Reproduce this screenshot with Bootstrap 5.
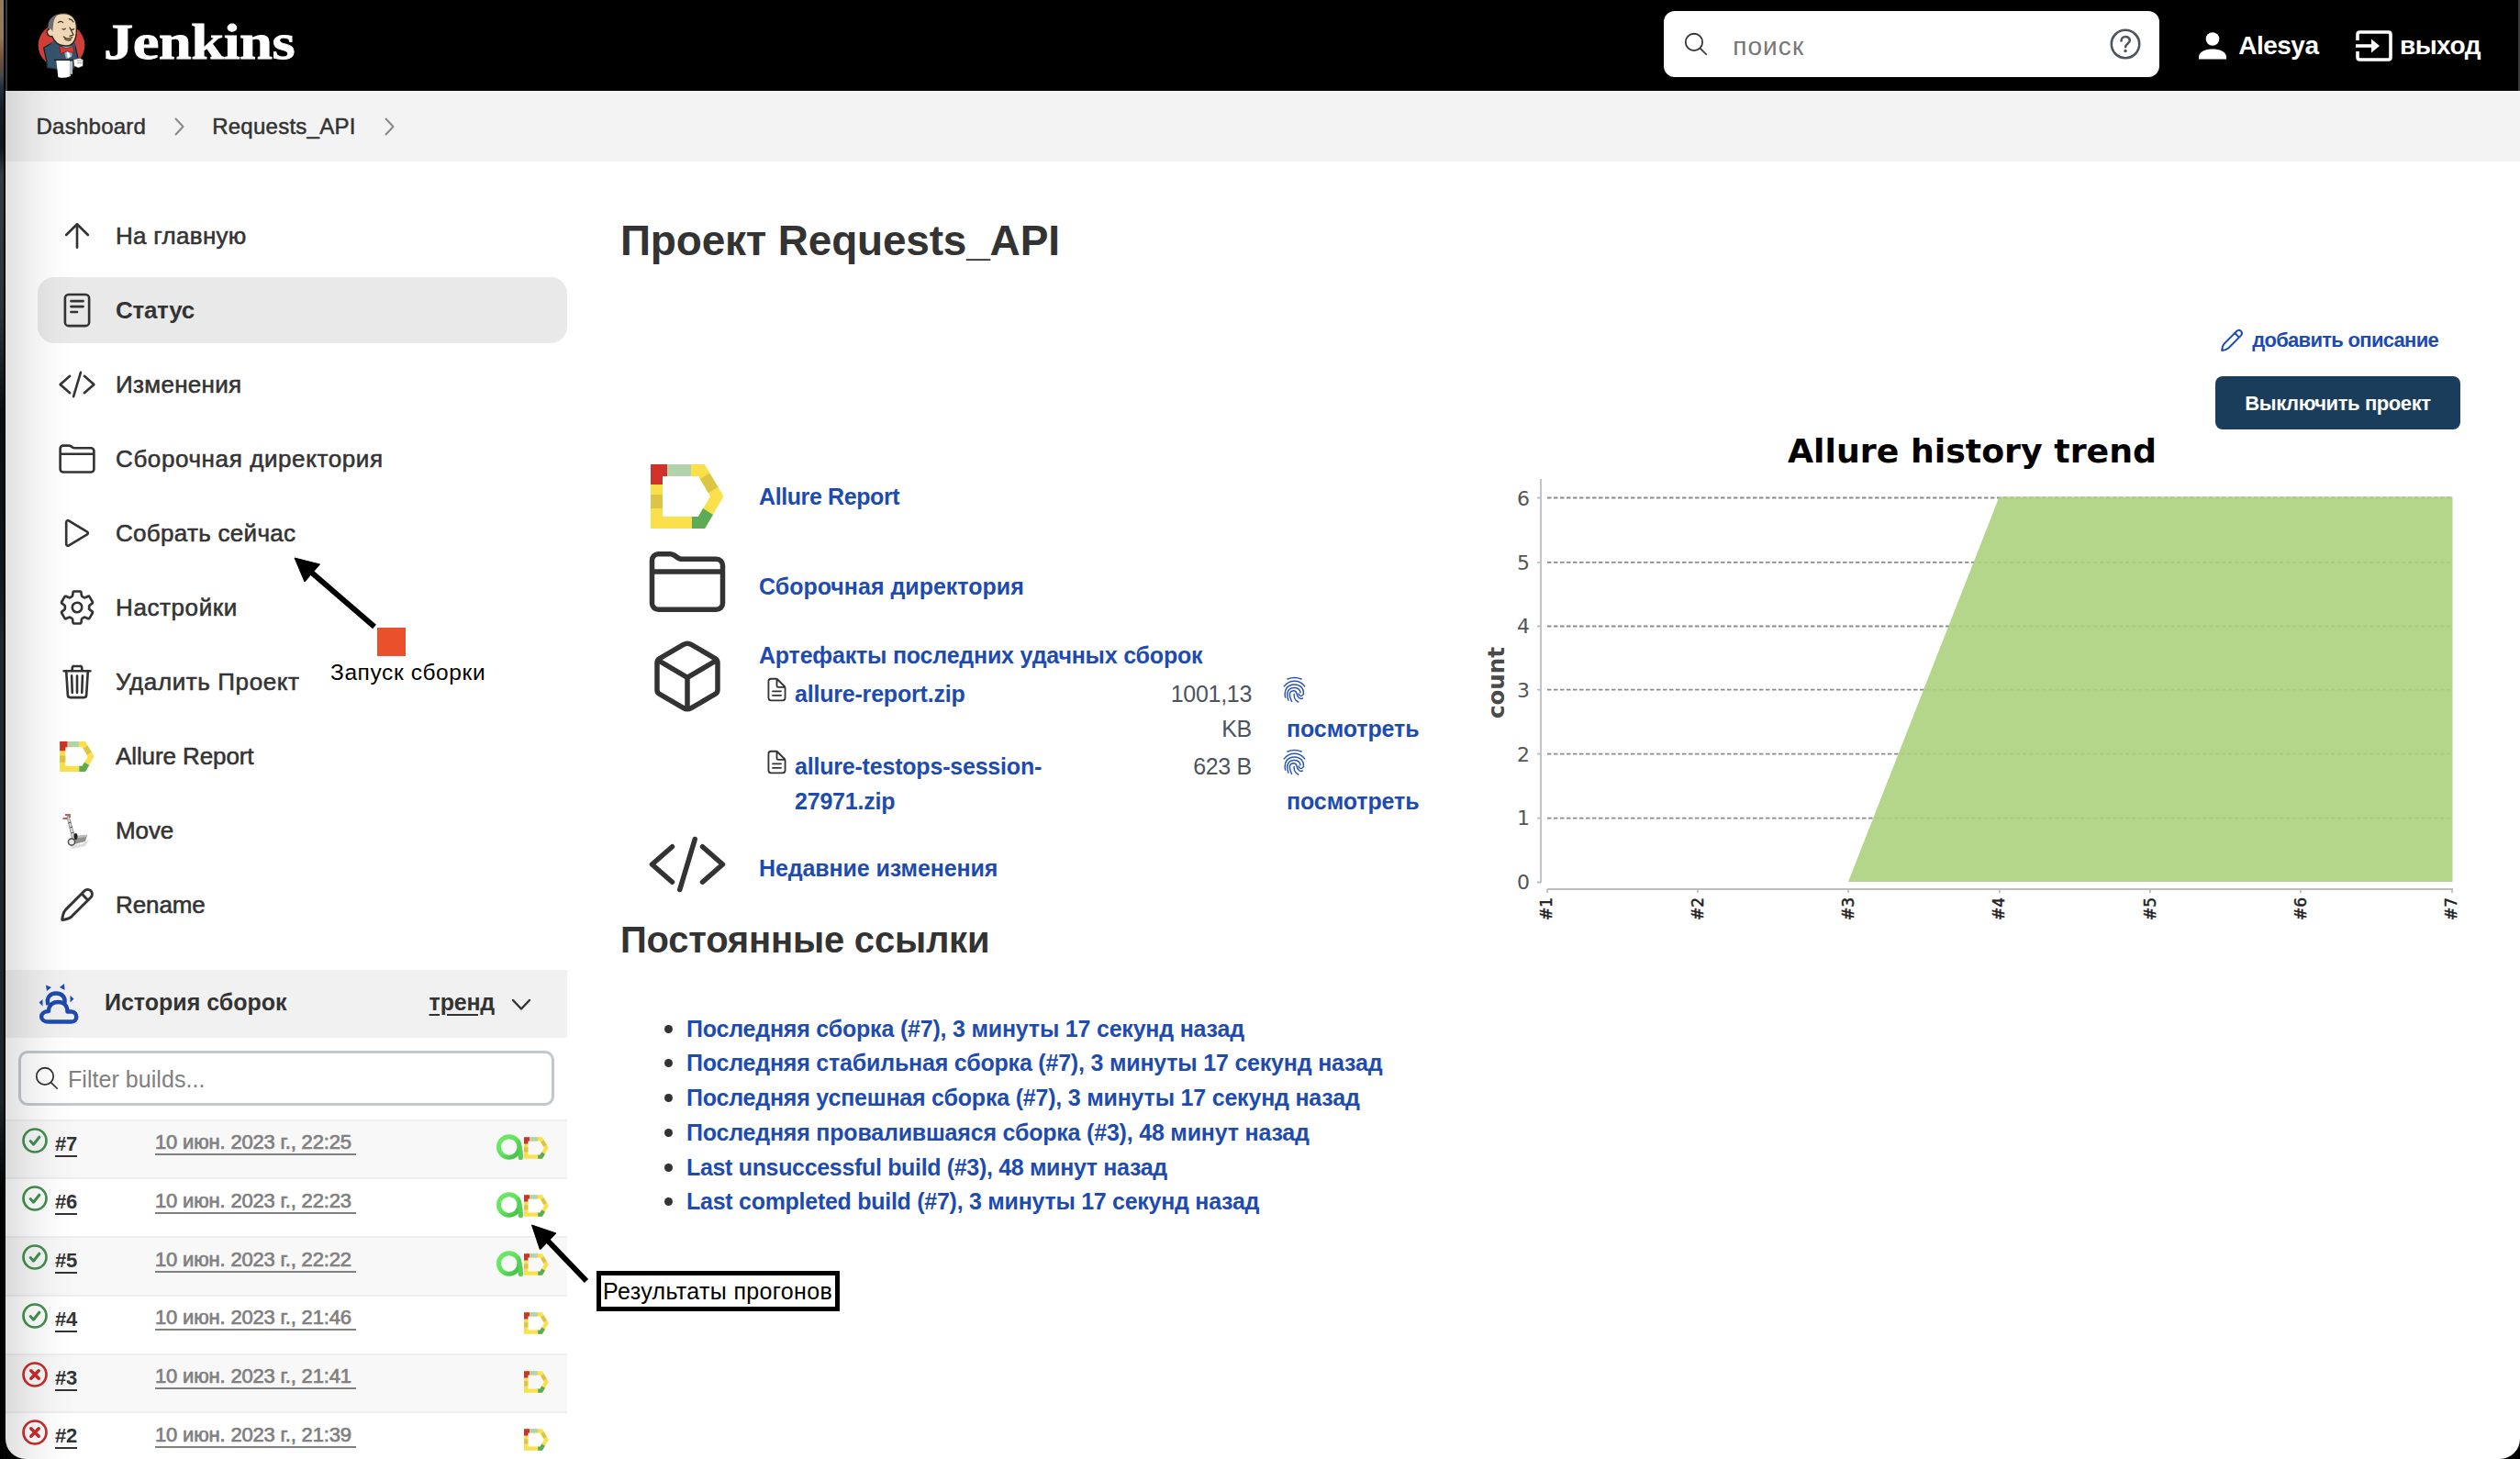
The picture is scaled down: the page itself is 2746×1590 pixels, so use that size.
<!DOCTYPE html>
<html lang="ru">
<head>
<meta charset="utf-8">
<title>Requests_API [Jenkins]</title>
<link rel="stylesheet" href="https://cdn.jsdelivr.net/npm/bootstrap@5.3.0/dist/css/bootstrap.min.css">
<style>
html { background: #000; }
body { background: #000; font-family: "Liberation Sans", Arial, sans-serif; color: #333; width: 2746px; height: 1590px; overflow: hidden; font-size: 25px; }
a { text-decoration: none; color: #1d4bb0; }
svg { display: block; flex: none; }
.desk { width: 6px; flex: none; border-right: 2px solid #04070a;
  background: linear-gradient(#8f7c5c 0, #94795a 40px, #6f4f3c 65px, #4a4a4c 82px, #22303d 95px, #141d26 120px, #10161c 160px, #343b42 190px, #2d3439 340px, #0a0e11 450px, #11161a 620px, #22282c 700px, #1e2428 1200px, #000 1300px); }
.win { background: #fff; border-radius: 0 0 22px 22px; overflow: hidden; }
.edge-shade { position: absolute; left: 0; top: 99px; bottom: 0; width: 78px; pointer-events: none;
  background: linear-gradient(90deg, rgba(0,0,0,.12), rgba(0,0,0,.06) 35%, rgba(0,0,0,.02) 65%, transparent); }
.topbar { height: 99px; background: #000; border-left: 2px solid #3a3a3a; border-right: 2px solid #3a3a3a; padding: 0 41px 0 32px; color: #fff; font-weight: 700; font-size: 28px; letter-spacing: -.5px; }
.find-box { width: 540px; height: 72px; background: #fff; border-radius: 12px; padding: 0 20px 0 20px; margin: -3px 43px 0 0; }
.find-box .ph { color: #777; font-weight: 400; letter-spacing: 1.1px; margin: 5px 0 0 25px; }
.user-name { margin: 0 40.5px 0 13px; }
.crumbs { height: 77px; background: #f3f3f3; padding-left: 33.5px; font-size: 24px; letter-spacing: .25px; -webkit-text-stroke: .5px; }
.crumbs svg { margin: 0 30px 0 31px; stroke: #888; stroke-width: 2; }
.side { width: 612px; flex: none; }
.tasks { padding: 45px 0 0 35px; gap: 9px; }
.task-item { height: 72px; padding-left: 22px; gap: 21px; border-radius: 18px; font-size: 26px; letter-spacing: .3px; -webkit-text-stroke: .55px; color: #333; }
.task-item.on { background: #e9e9e9; font-weight: 700; letter-spacing: -.3px; -webkit-text-stroke: 0; }
.task-item.wide { letter-spacing: .6px; }
.task-item.tight { letter-spacing: -.1px; }
.ic { fill: none; stroke: currentColor; stroke-width: 32; stroke-linecap: round; stroke-linejoin: round; }
.ic-find { color: #333; stroke-width: 30; }
.pane-head { height: 74px; margin-top: 35px; background: #f1f1f1; padding: 0 35px 2px 36px; font-weight: 700; font-size: 25px; }
.pane-head .ttl { margin-left: 28px; }
.pane-head .trend { color: #333; text-decoration: underline; text-underline-offset: 4px; text-decoration-thickness: 2px; letter-spacing: -.2px; }
.filter { margin: 14px 14px 0; height: 60px; border: 3px solid #c2c9ce; border-radius: 10px; padding-left: 13px; color: #808080; letter-spacing: .05px; }
.builds { margin-top: 14.5px; }
.b-row { height: 63.8px; border-top: 2px solid #efefef; padding: 0 20px 0 18px; font-size: 22px; }
.b-row:nth-child(odd) { background: #f8f8f8; }
.b-row .st { margin-top: 7px; }
.b-row .num { width: 109px; margin: 8px 0 0 8px; font-weight: 700; }
.b-row .num a { color: #333; border-bottom: 2px solid #333; line-height: 24px; display: inline-block; letter-spacing: -.3px; }
.b-row .dt { margin-top: 11.5px; color: #808080; border-bottom: 2px solid #808080; line-height: 24px; height: 26px; padding-right: 5px; letter-spacing: -.17px; -webkit-text-stroke: .7px; }
.b-row .qa { margin-top: 14px; }
.b-row .al { margin-top: 17px; }
.main { padding: 58px 0 0 58px; }
h1.pt { font-size: 46px; line-height: 56px; margin: 0; font-weight: 700; letter-spacing: -.2px; }
.left-col { width: 934px; padding-top: 206px; flex: none; }
.lk { font-weight: 700; letter-spacing: -.2px; line-height: 38px; }
.r { padding-left: 29px; }
.r .big { margin-right: 34px; }
.file-line { margin: 0 0 3px 5px; }
.file-name { width: 370px; margin-left: 5px; }
.file-size { width: 128px; text-align: right; line-height: 38px; color: #4d545d; letter-spacing: -.3px; }
.fp { margin-left: 32px; width: 160px; line-height: 38px; }
.fp svg { margin: 0 0 9px 2px; }
.fp .lk { margin-left: 6px; letter-spacing: -.1px; }
h2.pl { font-size: 40px; line-height: 60px; margin: 0; font-weight: 700; letter-spacing: -.2px; }
.perma { margin: 47.500px 0 0 0; padding-left: 72px; list-style: none; }
.perma li { height: 37.8px; line-height: 38px; position: relative; white-space: nowrap; }
.perma li::before { content: ""; position: absolute; left: -24px; top: 15px; width: 9px; height: 9px; border-radius: 50%; background: #333; }
.right-col { width: 1080px; }
.desc { margin: 60px 33px 0 0; height: 41px; font-size: 22px; font-weight: 700; letter-spacing: -.7px; gap: 8px; }
.off-btn { width: 267px; height: 58px; margin: 19px 9px 0 0; background: #1b3d5c; border: 0; border-radius: 8px; color: #fff; font-size: 22px; font-weight: 700; letter-spacing: -.4px; padding: 0; }
.off-btn:hover { background: #1b3d5c; }
.chart text { font-family: "DejaVu Sans", sans-serif; }
.note { position: absolute; color: #000; white-space: nowrap; }
.note-run { left: 360px; top: 718px; font-size: 24.5px; line-height: 30px; letter-spacing: .6px; }
.note-res { left: 650px; top: 1384.5px; width: 265px; height: 44px; border: 5px solid #000; background: #fff; font-size: 25px; line-height: 34px; padding-left: 2px; letter-spacing: .35px; }
.marks { position: absolute; left: 0; top: 0; }
</style>
<script src="https://cdn.jsdelivr.net/npm/bootstrap@5.3.0/dist/js/bootstrap.bundle.min.js"></script>
</head>
<body class="d-flex position-relative m-0">
<svg width="0" height="0" class="position-absolute">
  <defs>
    <linearGradient id="gr" x1="0" x2="1" y1="0" y2="1"><stop offset="0" stop-color="#6fe86a"/><stop offset=".45" stop-color="#5fe65c"/><stop offset="1" stop-color="#44b848"/></linearGradient>
    <symbol id="allure" viewBox="0 0 80 70">
      <path fill="#fae04a" fill-rule="evenodd" d="M0 0H59L79.500 35 59 70H0zM13 13V57H52L65 35 52 13z"/>
      <path fill="#d0312a" d="M0 0H18V13H13V22H0z"/><path fill="#b2d3ab" d="M18 0H44V13H18z"/>
      <path fill="#dcc444" d="M0 33H13V48H0zM54 16 64 9.500 73.500 25 63 31z"/>
      <path fill="#5cab55" d="M45 57H52L57 48 68 55 59 70H45z"/>
    </symbol>
    <symbol id="qa" viewBox="0 0 30 29">
      <circle cx="13.700" cy="14" r="11.200" fill="none" stroke="url(#gr)" stroke-width="5"/>
      <path d="M24.500 5c2.800 5 4.500 12 4.500 20.500a2.600 2.600 0 0 1-5.200 0V12z" fill="#55cf55"/>
    </symbol>
    <symbol id="ok" viewBox="0 0 28 28"><circle cx="14" cy="14" r="12.500" fill="none" stroke="#3f9150" stroke-width="2.700"/><path d="M9.200 14.500l3.300 3.700 6.300-8" fill="none" stroke="#3f9150" stroke-width="3" stroke-linecap="round" stroke-linejoin="round"/></symbol>
    <symbol id="bad" viewBox="0 0 28 28"><circle cx="14" cy="14" r="12.500" fill="none" stroke="#cc2a2a" stroke-width="2.700"/><path d="M9.800 9.800l8.400 8.400M18.200 9.800l-8.400 8.400" fill="none" stroke="#cc2a2a" stroke-width="3.600" stroke-linecap="round"/></symbol>
    <symbol id="folder" viewBox="0 0 512 512"><path d="M440 432H72a40 40 0 01-40-40V120a40 40 0 0140-40h75.890a40 40 0 0122.190 6.720l27.840 18.560a40 40 0 0022.190 6.720H440a40 40 0 0140 40v240a40 40 0 01-40 40zM32 192h448"/></symbol>
    <symbol id="code" viewBox="0 0 512 512"><path d="M160 368L32 256l128-112M352 368l128-112-128-112M304 96l-96 320"/></symbol>
    <symbol id="search" viewBox="0 0 512 512"><path d="M221.090 64a157.090 157.090 0 10157.090 157.090A157.100 157.100 0 00221.090 64zM338.290 338.290L448 448"/></symbol>
    <symbol id="pen" viewBox="0 0 512 512"><path stroke-width="36" d="M58 456 C62 400 76 352 104 322 L352 74 C376 50 412 46 438 70 C464 98 460 134 438 158 L190 406 C158 436 112 452 58 456zM318 110 L400 194"/></symbol>
    <symbol id="doc" viewBox="0 0 512 512"><path d="M416 221.250V416a48 48 0 01-48 48H144a48 48 0 01-48-48V96a48 48 0 0148-48h98.750a32 32 0 0122.620 9.370l141.260 141.260a32 32 0 019.370 22.620zM256 56v120a32 32 0 0032 32h120M176 288h160M176 368h160"/></symbol>
    <symbol id="finger" viewBox="24 40 76 88"><path fill="none" stroke="#2a55b8" stroke-width="4.500" stroke-linecap="round" d="M39 49Q62 40 85 49M28 73Q42 56 62 56 83 56 96 73M32 110C26 84 40 67 62 67 84 67 94 84 92 98 89 109 77 106 76 98M42 119C33 92 43 78 61 78 76 78 81 88 82 94M53 123C39 94 50 88 60 88 72 88 68 100 74 108 78 114 84 115 89 113M75 125C64 120 60 112 61 99"/></symbol>
  </defs>
</svg>

<div class="desk"></div>
<div class="win flex-grow-1 position-relative d-flex flex-column">
  <header class="topbar d-flex align-items-center">
    <svg width="54" height="76" viewBox="120 30 162 228">
      <ellipse cx="201" cy="142" rx="76" ry="73" fill="#cd3f37"/>
      <path d="M143 150 L172 133 L244 138 L256 190 L240 222 L182 220 L154 216 L152 192z" fill="#33526b" stroke="#1b2026" stroke-width="4"/>
      <path d="M186 118 L166 136 L190 192 L246 190 L246 140 L238 118z" fill="#35536c"/>
      <path d="M204 144 L216 186 L234 180 L240 146z" fill="#8fb2cf"/><path d="M216 158l6-2 8 22-8 8z" fill="#fff"/>
      <path d="M160 92 C154 60 174 38 208 38 C240 38 252 62 250 92 C250 124 238 144 214 144 C190 144 176 128 170 112 C156 116 148 96 160 88z" fill="#efd7b5" stroke="#262220" stroke-width="4"/>
      <path d="M158 88 C154 62 170 46 190 41 C176 54 176 64 174 76 L172 98 C168 88 164 88 158 88z" fill="#6b6d70"/>
      <path d="M190 68q10-8 16 0M226 56q10 2 14 10M204 88q6 5 10-1M232 90q6 3 10-2M228 84l12 24-12 4M208 114q12 12 28 2M212 122q10 8 20 2" fill="none" stroke="#3a2c22" stroke-width="3.500" stroke-linecap="round"/>
      <path d="M194 144l22 8 24-6 2 22-22-6-22 8z" fill="#d63a34" stroke="#631a18" stroke-width="2"/>
      <path d="M176 190 L242 190" stroke="#1b2026" stroke-width="4"/>
      <path d="M184 192H228V244Q208 252 190 246z" fill="#fff"/><path d="M228 194h9v42h-6v8h-4z" fill="#b9bcc4"/>
      <path d="M240 188 L262 184 L272 190 L271 210 L256 216 L242 210z" fill="#fff" stroke="#333" stroke-width="2"/><path d="M252 192h16M252 200h16" stroke="#777" stroke-width="2"/>
    </svg>
    <svg width="230" height="96" class="ms-2" viewBox="0 0 230 96"><text x="11" y="62" font-family="Liberation Serif" font-weight="700" font-size="54" fill="#fff" stroke="#fff" stroke-width=".8" textLength="208" lengthAdjust="spacingAndGlyphs">Jenkins</text></svg>
    <div class="find-box d-flex align-items-center ms-auto">
      <svg class="ic ic-find" width="30" height="30"><use href="#search"/></svg>
      <span class="ph">поиск</span>
      <svg class="ms-auto" width="34" height="34" viewBox="0 0 34 34" fill="none" stroke="#4d545d" stroke-width="2.600"><circle cx="17" cy="17" r="15.200"/><path d="M12.500 13.500c0-6 9.300-6 9.300-.5 0 3.600-4.700 3.800-4.700 7.200" stroke-linecap="round"/><circle cx="17" cy="24.600" r="1" fill="#4d545d" stroke-width="1.500"/></svg>
    </div>
    <svg width="30" height="30" viewBox="0 0 30 30" fill="#fff"><circle cx="15" cy="7.500" r="7.300"/><path d="M0 29.500V27C0 21 8 18.500 15 18.500S30 21 30 27v2.500z"/></svg>
    <span class="user-name">Alesya</span>
    <svg width="40" height="34" viewBox="0 0 40 34" fill="none" stroke="#fff" stroke-width="3.600"><path d="M2 11V4.500Q2 2 4.500 2H35.500Q38 2 38 4.500V29.500Q38 32 35.500 32H4.500Q2 32 2 29.500V23"/><path d="M0 17H19"/><path d="M17 9.500L26 17l-9 7.500z" fill="#fff" stroke="none"/></svg>
    <span class="ps-2">выход</span>
  </header>
  <nav class="crumbs d-flex align-items-center">
    <span>Dashboard</span>
    <svg class="ic" width="11" height="20" viewBox="0 0 11 20"><path d="M1.500 1.500 9.500 10 1.500 18.500"/></svg>
    <span>Requests_API</span>
    <svg class="ic" width="11" height="20" viewBox="0 0 11 20"><path d="M1.500 1.500 9.500 10 1.500 18.500"/></svg>
  </nav>
  <div class="d-flex flex-grow-1">
    <aside class="side">
      <nav class="tasks d-flex flex-column">
        <a class="task-item d-flex align-items-center"><svg class="ic" width="42" height="42" viewBox="0 0 512 512"><path d="M112 244l144-144 144 144M256 120v292"/></svg>На главную</a>
        <a class="task-item on d-flex align-items-center"><svg class="ic" width="42" height="42" viewBox="0 0 512 512"><rect x="96" y="48" width="320" height="416" rx="48"/><path d="M176 136h160M176 208h160M176 280h80"/></svg>Статус</a>
        <a class="task-item d-flex align-items-center"><svg class="ic" width="42" height="42"><use href="#code"/></svg>Изменения</a>
        <a class="task-item wide d-flex align-items-center"><svg class="ic" width="42" height="42"><use href="#folder"/></svg>Сборочная директория</a>
        <a class="task-item d-flex align-items-center"><svg class="ic" width="42" height="42" viewBox="0 0 512 512"><path d="M112 111v290c0 17.440 17 28.520 31 20.160l247.900-148.370c12.120-7.250 12.120-26.330 0-33.580L143 90.840c-14-8.360-31 2.720-31 20.160z"/></svg>Собрать сейчас</a>
        <a class="task-item wide d-flex align-items-center"><svg class="ic" width="42" height="42" viewBox="0 0 512 512"><path d="M262.290 192.310a64 64 0 1057.400 57.400 64.130 64.130 0 00-57.400-57.400zM416.390 256a154.340 154.340 0 01-1.530 20.790l45.210 35.460a10.810 10.810 0 012.450 13.750l-42.770 74a10.810 10.810 0 01-13.140 4.590l-44.900-18.080a16.110 16.110 0 00-15.170 1.750A164.480 164.480 0 01325 400.800a15.940 15.940 0 00-8.820 12.140l-6.730 47.890a11.080 11.080 0 01-10.680 9.170h-85.540a11.110 11.110 0 01-10.690-8.870l-6.720-47.820a16.070 16.070 0 00-9-12.220 155.300 155.300 0 01-21.460-12.570 16 16 0 00-15.110-1.710l-44.890 18.070a10.810 10.810 0 01-13.140-4.580l-42.770-74a10.800 10.800 0 012.450-13.750l38.210-30a16.050 16.050 0 006-14.080c-.36-4.170-.58-8.330-.58-12.500s.21-8.270.58-12.350a16 16 0 00-6.070-13.940l-38.190-30A10.810 10.810 0 0149.480 186l42.770-74a10.810 10.810 0 0113.140-4.590l44.900 18.080a16.110 16.110 0 0015.170-1.750A164.480 164.480 0 01187 111.200a15.940 15.940 0 008.820-12.140l6.730-47.890A11.080 11.080 0 01213.230 42h85.540a11.110 11.110 0 0110.690 8.870l6.720 47.820a16.070 16.070 0 009 12.220 155.300 155.300 0 0121.460 12.570 16 16 0 0015.110 1.710l44.890-18.070a10.810 10.810 0 0113.140 4.580l42.770 74a10.800 10.800 0 01-2.450 13.750l-38.210 30a16.050 16.050 0 00-6.050 14.080c.33 4.140.55 8.300.55 12.470z"/></svg>Настройки</a>
        <a class="task-item wide d-flex align-items-center"><svg class="ic" width="42" height="42" viewBox="0 0 512 512"><path d="M112 112l20 320c.950 18.490 14.400 32 32 32h184c17.670 0 30.870-13.510 32-32l20-320M80 112h352M192 112V72a23.930 23.930 0 0124-24h80a23.930 23.930 0 0124 24v40M256 176v224M184 176l8 224M328 176l-8 224"/></svg>Удалить Проект</a>
        <a class="task-item tight d-flex align-items-center"><svg width="42" height="33"><use href="#allure"/></svg>Allure Report</a>
        <a class="task-item tight d-flex align-items-center"><svg width="42" height="42" viewBox="0 0 42 42">
          <path d="M12 37l14-1 8-5-4 7-14 3z" fill="#ddd"/>
          <path d="M17 28l15-2-2 7-12 3z" fill="#8f928d"/><path d="M18 27l14-1.500-1 2.500-13 2z" fill="#b9bbb7"/>
          <path d="M10 6l6 25 3-1L12 5z" fill="#dededa" stroke="#777" stroke-width=".8"/><path d="M11.500 13l3-1M13 18l3-1M14.500 24l3-1" stroke="#555" stroke-width="1"/>
          <path d="M5.500 8h5M8 4h5v3" stroke="#b9605c" stroke-width="1.800" fill="none"/><ellipse cx="19.500" cy="27.500" rx="2" ry="3.600" fill="#222"/>
          <circle cx="15" cy="33.500" r="3.600" fill="#e8ebe6" stroke="#4a4c48" stroke-width="1.500"/></svg>Move</a>
        <a class="task-item tight d-flex align-items-center"><svg class="ic" width="42" height="42"><use href="#pen"/></svg>Rename</a>
      </nav>
      <div class="pane-head d-flex align-items-center">
        <svg width="44" height="48" viewBox="0 -3 44 48" fill="none" stroke="#1d4bb0" stroke-width="4.400" stroke-linejoin="round"><path d="M10.500 23C8 15 13 10.500 19 10.500S29.500 14 28.500 21"/><path d="M11 41.500C.5 41.500.5 30.500 11 30 11 22 16.500 20 21.500 20 28 20 31.500 24.500 31.500 30.500H36C43 31 43 41.500 36 41.500z"/><path d="M8 1.500l6 2.500-5 4zM28 0l-5 4 5.500 3zM.5 20.500l4-3.500v7.500zM34.500 13l4 3.500-4 4z" fill="#1d4bb0" stroke="none"/></svg>
        <span class="ttl">История сборок</span>
        <a class="trend ms-auto">тренд</a>
        <svg class="ic" width="22" height="14" viewBox="0 0 22 14" style="margin:3px 4px 0 18px;stroke-width:2.400"><path d="M2 2l9 9.500L20 2"/></svg>
      </div>
      <div class="filter d-flex align-items-center"><svg class="ic ic-find" width="30" height="30"><use href="#search"/></svg><span class="ps-2 ms-0 pt-1">Filter builds...</span></div>
      <div class="builds">
        <div class="b-row d-flex"><svg class="st" width="28" height="28"><use href="#ok"/></svg><span class="num"><a>#7</a></span><span class="dt">10 июн. 2023 г., 22:25</span><svg class="qa ms-auto" width="30" height="29"><use href="#qa"/></svg><svg class="al" width="27" height="24"><use href="#allure"/></svg></div>
        <div class="b-row d-flex"><svg class="st" width="28" height="28"><use href="#ok"/></svg><span class="num"><a>#6</a></span><span class="dt">10 июн. 2023 г., 22:23</span><svg class="qa ms-auto" width="30" height="29"><use href="#qa"/></svg><svg class="al" width="27" height="24"><use href="#allure"/></svg></div>
        <div class="b-row d-flex"><svg class="st" width="28" height="28"><use href="#ok"/></svg><span class="num"><a>#5</a></span><span class="dt">10 июн. 2023 г., 22:22</span><svg class="qa ms-auto" width="30" height="29"><use href="#qa"/></svg><svg class="al" width="27" height="24"><use href="#allure"/></svg></div>
        <div class="b-row d-flex"><svg class="st" width="28" height="28"><use href="#ok"/></svg><span class="num"><a>#4</a></span><span class="dt">10 июн. 2023 г., 21:46</span><svg class="al ms-auto" width="27" height="24"><use href="#allure"/></svg></div>
        <div class="b-row d-flex"><svg class="st" width="28" height="28"><use href="#bad"/></svg><span class="num"><a>#3</a></span><span class="dt">10 июн. 2023 г., 21:41</span><svg class="al ms-auto" width="27" height="24"><use href="#allure"/></svg></div>
        <div class="b-row d-flex" style="height:50px"><svg class="st" width="28" height="28"><use href="#bad"/></svg><span class="num"><a>#2</a></span><span class="dt">10 июн. 2023 г., 21:39</span><svg class="al ms-auto" width="27" height="24"><use href="#allure"/></svg></div>
      </div>
    </aside>
    <main class="main flex-grow-1">
      <h1 class="pt">Проект Requests_API</h1>
      <div class="d-flex">
        <div class="left-col">
          <div class="r d-flex align-items-center" style="height:90px"><svg class="mx-1" width="80" height="70"><use href="#allure"/></svg><a class="lk" style="margin-left:34px;letter-spacing:-.4px">Allure Report</a></div>
          <div class="r d-flex align-items-center" style="height:96px"><svg class="ic big" width="88" height="88"><use href="#folder"/></svg><a class="lk" style="padding-top:9px;letter-spacing:0">Сборочная директория</a></div>
          <div class="r d-flex align-items-start" style="height:207px"><svg class="ic big" width="88" height="88" viewBox="0 0 512 512" style="margin-top:11px"><path d="M448 341.370V170.610A32 32 0 00432.110 143l-152-88.460a47.940 47.940 0 00-48.240 0L79.890 143A32 32 0 0064 170.610v170.760A32 32 0 0079.890 369l152 88.460a48 48 0 0048.240 0l152-88.460A32 32 0 00448 341.370zM69 153.990l187 110 187-110M256 463.990v-200"/></svg>
            <div style="padding-top:12.500px"><a class="lk d-block">Артефакты последних удачных сборок</a>
              <div class="file-line d-flex pt-1"><svg class="ic" width="29" height="29"><use href="#doc"/></svg><a class="lk file-name">allure-report.zip</a><span class="file-size">1001,13<br>KB</span><div class="fp"><svg width="25" height="29"><use href="#finger"/></svg><a class="lk d-block">посмотреть</a></div></div>
              <div class="file-line d-flex"><svg class="ic" width="29" height="29"><use href="#doc"/></svg><a class="lk file-name">allure-testops-session-<br>27971.zip</a><span class="file-size">623 B</span><div class="fp"><svg width="25" height="29"><use href="#finger"/></svg><a class="lk d-block">посмотреть</a></div></div>
            </div></div>
          <div class="r d-flex align-items-center" style="height:105px"><svg class="ic big" width="88" height="88"><use href="#code"/></svg><a class="lk pt-2" style="letter-spacing:-.1px">Недавние изменения</a></div>
          <h2 class="pl">Постоянные ссылки</h2>
          <ul class="perma">
            <li><a class="lk">Последняя сборка (#7), 3 минуты 17 секунд назад</a></li>
            <li><a class="lk">Последняя стабильная сборка (#7), 3 минуты 17 секунд назад</a></li>
            <li><a class="lk">Последняя успешная сборка (#7), 3 минуты 17 секунд назад</a></li>
            <li><a class="lk">Последняя провалившаяся сборка (#3), 48 минут назад</a></li>
            <li><a class="lk" style="letter-spacing:-.33px">Last unsuccessful build (#3), 48 минут назад</a></li>
            <li><a class="lk" style="letter-spacing:-.27px">Last completed build (#7), 3 минуты 17 секунд назад</a></li>
          </ul>
        </div>
        <div class="right-col d-flex flex-column align-items-end">
          <a class="desc d-flex align-items-center"><svg class="ic" width="28" height="28"><use href="#pen"/></svg>добавить описание</a>
          <button class="btn off-btn">Выключить проект</button>
          <svg class="chart" width="1080" height="542" viewBox="1610 468 1080 542">
            <text x="1948" y="504" font-size="35.500" font-weight="700" fill="#000" textLength="402" lengthAdjust="spacingAndGlyphs">Allure history trend</text>
            <g stroke="#8c8c8c" stroke-width="1.800" stroke-dasharray="4.500 2.500"><path d="M1686 542.500H2672M1686 612.800H2672M1686 682.500H2672M1686 751.700H2672M1686 821.700H2672M1686 891.700H2672"/></g>
            <path d="M2014 961L2178.500 541.500H2672.500V961z" fill="#abd17e" fill-opacity=".9"/>
            <g stroke="#bdbdbd" stroke-width="1.800" fill="none"><path d="M1679 522V962M1675 542.500h4M1675 612.800h4M1675 682.500h4M1675 751.700h4M1675 821.700h4M1675 891.700h4M1675 961.500h4"/><path d="M1686 969H2673M1686 969v4M1850 969v4M2014 969v4M2179 969v4M2343 969v4M2507 969v4M2672 969v4"/></g>
            <g font-size="22" fill="#555" text-anchor="end"><text x="1667" y="551">6</text><text x="1667" y="621">5</text><text x="1667" y="690">4</text><text x="1667" y="760">3</text><text x="1667" y="830">2</text><text x="1667" y="899">1</text><text x="1667" y="969">0</text></g>
            <g font-size="17" fill="#222" stroke="#222" stroke-width=".5"><text transform="translate(1691 1003)rotate(-90)">#1</text><text transform="translate(1856 1003)rotate(-90)">#2</text><text transform="translate(2020 1003)rotate(-90)">#3</text><text transform="translate(2184 1003)rotate(-90)">#4</text><text transform="translate(2349 1003)rotate(-90)">#5</text><text transform="translate(2513 1003)rotate(-90)">#6</text><text transform="translate(2677 1003)rotate(-90)">#7</text></g>
            <text transform="translate(1639 783)rotate(-90)" font-size="24.500" font-weight="700" fill="#4a4a4a">count</text>
          </svg>
        </div>
      </div>
    </main>
  </div>
  <div class="edge-shade"></div>
</div>
<svg class="marks" width="960" height="1590" viewBox="0 0 960 1590">
  <g stroke="#000" stroke-width="6"><path d="M408 683L335 620"/><path d="M639 1396L591 1346"/></g>
  <path d="M321 608L348.500 615 332 634zM579.500 1335L606 1344 588.500 1362z" stroke="#000" stroke-width="1"/>
  <path d="M411 684h31v31h-31z" fill="#eb502d"/>
</svg>
<div class="note note-run">Запуск сборки</div>
<div class="note note-res">Результаты прогонов</div>
</body>
</html>
